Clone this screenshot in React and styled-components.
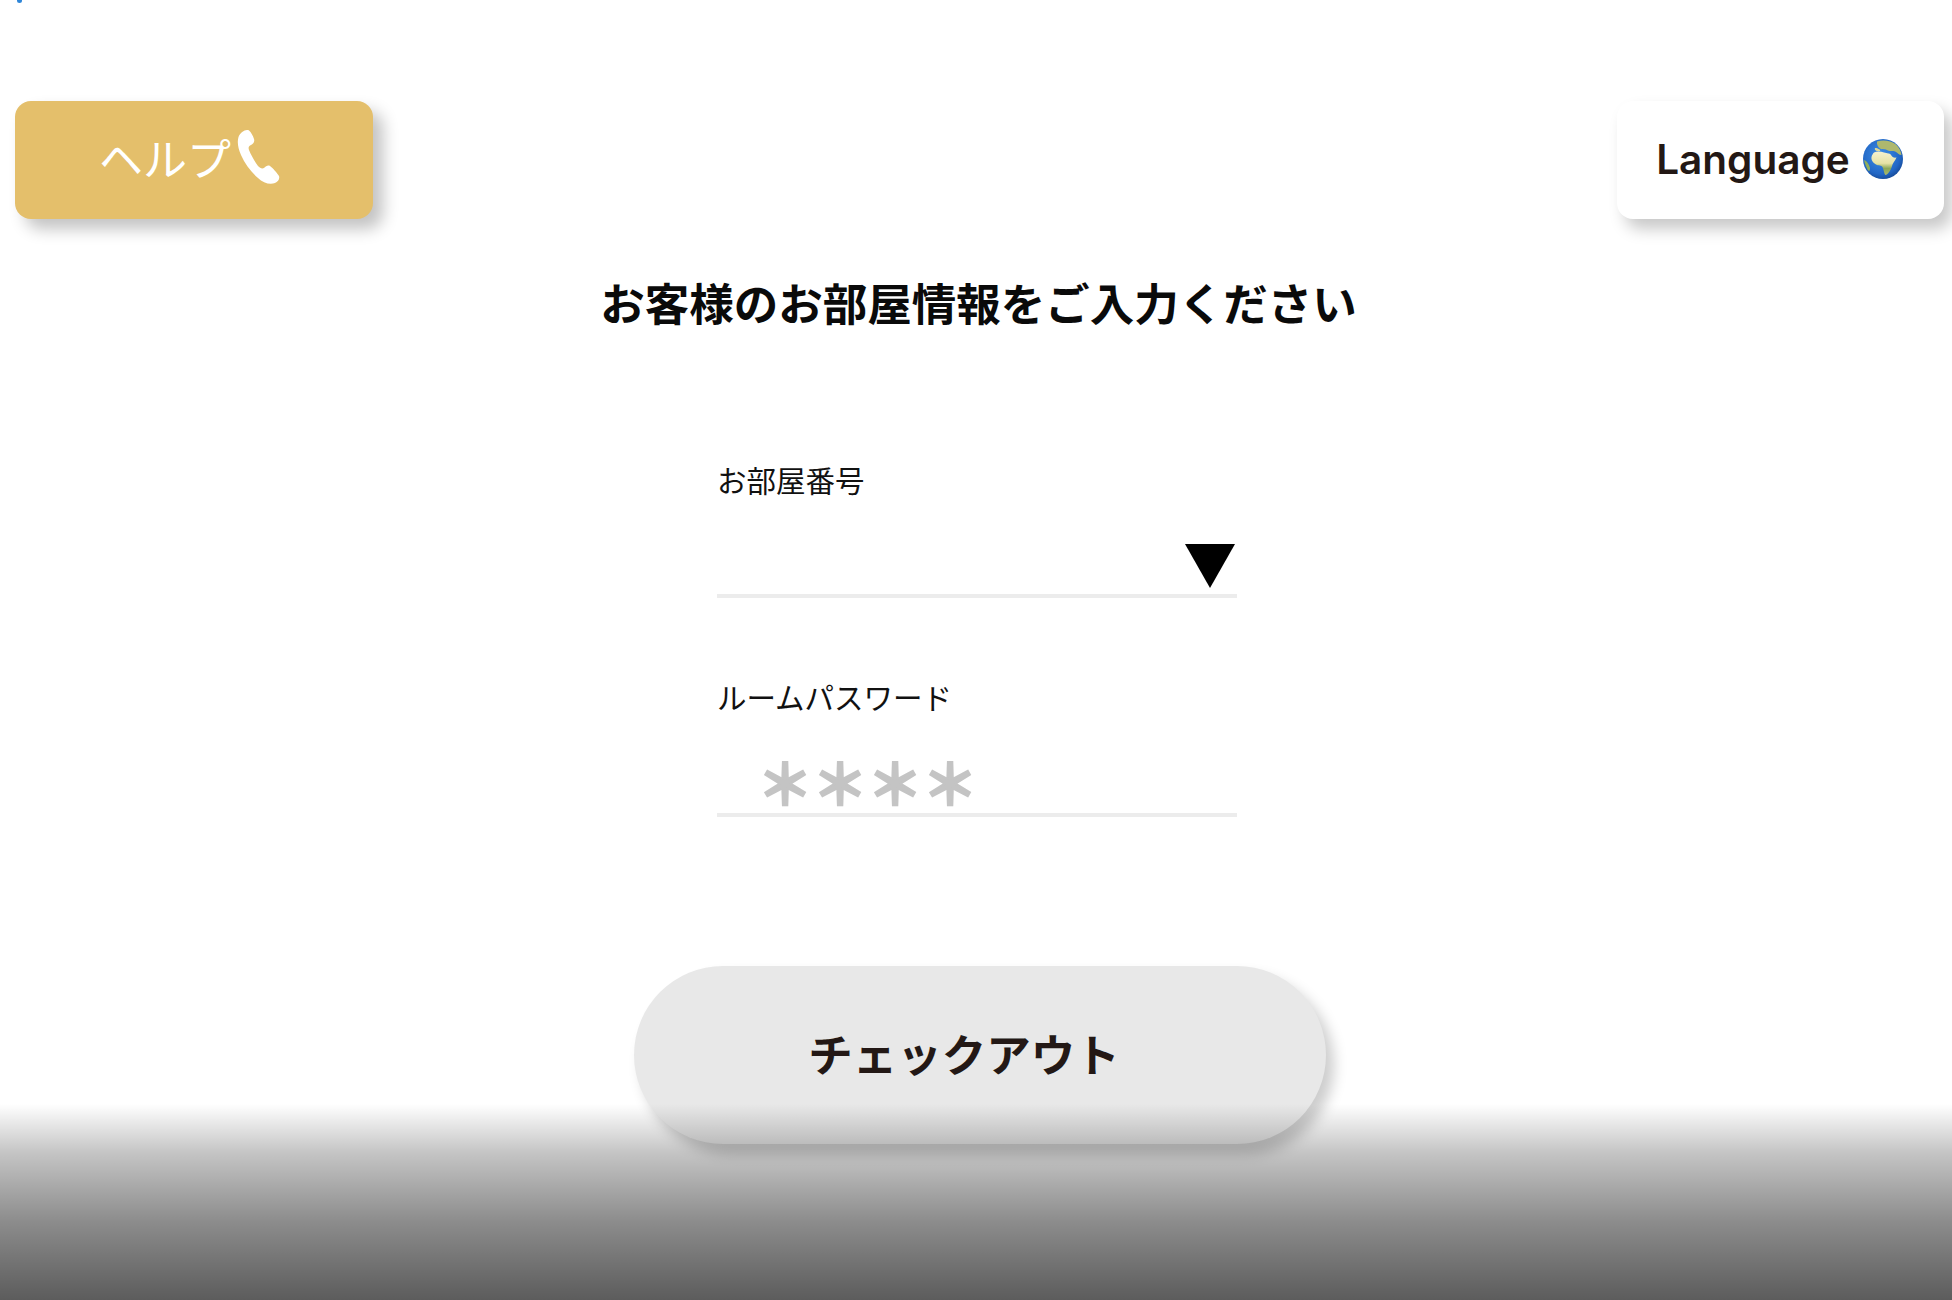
import React from 'react';
import styled, { createGlobalStyle } from 'styled-components';

const Global = createGlobalStyle`
  html, body { margin: 0; padding: 0; background: #fff; }
  * { box-sizing: border-box; }
  body { font-family: "Noto Sans CJK JP", "Noto Sans", sans-serif; }
`;

const Page = styled.main`
  position: relative;
  width: 1952px;
  height: 1300px;
  overflow: hidden;
  background: #fff;
  display: flex;
  flex-direction: column;
`;

const TopMark = styled.i`
  position: absolute;
  left: 17px;
  top: 0;
  width: 5px;
  height: 3px;
  border-radius: 0 0 3px 3px;
  background: #2f86d8;
`;

const TopBar = styled.header`
  display: flex;
  justify-content: space-between;
  padding: 101px 8px 0 15px;
`;

const HelpButton = styled.button`
  width: 358px;
  height: 118px;
  border: 0;
  border-radius: 16px;
  background: #e4bf6b;
  color: #fff;
  font-family: inherit;
  font-size: 44px;
  font-weight: 400;
  display: flex;
  align-items: center;
  justify-content: center;
  gap: 6px;
  padding: 0 8px 6px 0;
  box-shadow: 10px 10px 16px rgba(0, 0, 0, 0.24);
`;

const LanguageButton = styled.button`
  width: 327px;
  height: 118px;
  border: 0;
  border-radius: 16px;
  background: #fff;
  color: #231815;
  font-family: Inter, "Noto Sans", sans-serif;
  font-size: 40.5px;
  font-weight: 600;
  display: flex;
  align-items: center;
  justify-content: center;
  gap: 13px;
  padding: 0 2px 2px 0;
  box-shadow: 8px 10px 16px rgba(0, 0, 0, 0.22);
`;

const Title = styled.h1`
  margin: 50px 0 0 5px;
  font-size: 44.5px;
  line-height: 66px;
  font-weight: 700;
  color: #0a0a0a;
  text-align: center;
`;

const Form = styled.form`
  width: 520px;
  margin: 122px 0 0 717px;
  display: flex;
  flex-direction: column;
  gap: 76px;
`;

const Field = styled.div`
  display: flex;
  flex-direction: column;
`;

const Label = styled.label`
  font-size: 29.5px;
  line-height: 44px;
  color: #111;
  font-weight: 400;
`;

const Control = styled.div`
  height: ${p => p.$h}px;
  border-bottom: 4px solid #ececec;
  display: flex;
  align-items: flex-end;
  justify-content: ${p => (p.$end ? 'flex-end' : 'flex-start')};
  padding: ${p => p.$pad};
`;

const Arrow = styled.span`
  width: 0;
  height: 0;
  border-left: 25px solid transparent;
  border-right: 25px solid transparent;
  border-top: 44px solid #000;
`;

const Mask = styled.span`
  font-size: 56px;
  line-height: 56px;
  letter-spacing: -1px;
  color: #c4c4c4;
  font-weight: 700;
  -webkit-text-stroke: 2px #c4c4c4;
`;

const Checkout = styled.button`
  align-self: flex-start;
  width: 692px;
  height: 178px;
  margin: 149px 0 0 634px;
  border: 0;
  border-radius: 89px;
  background: #e8e8e8;
  color: #231815;
  font-family: inherit;
  font-size: 44.5px;
  font-weight: 700;
  padding: 0 32px 5px 0;
  box-shadow: 8px 10px 14px rgba(0, 0, 0, 0.2);
`;

const Fade = styled.div`
  position: absolute;
  left: 0;
  right: 0;
  bottom: 0;
  height: 196px;
  pointer-events: none;
  background: linear-gradient(to bottom, rgba(0,0,0,0) 0%, rgba(0,0,0,0.23) 25%, rgba(0,0,0,0.45) 60%, rgba(0,0,0,0.64) 100%);
`;

const Phone = () => (
  <svg width="44" height="56" viewBox="0 0 44 56" aria-hidden="true">
    <path
      fill="#fff"
      d="M10 1 C7 1 3 4 1.500 8 C0 13 1 19 4 26 C8 35 14 43 21 49 C26 54 33 56 38 54 C41 53 43 50 42 47 C40 44 36 39 33 37 C31 36 29 37 27 39 C25 40 23 39 21 37 C18 33 14 26 12 21 C11 18 12 17 14 16 C16 15 18 13 17 10 C16 7 14 3 12 1.500 C11.500 1 11 1 10 1 Z"
    />
  </svg>
);

const Globe = () => (
  <svg width="40" height="40" viewBox="0 0 40 40" aria-hidden="true">
    <defs>
      <radialGradient id="sea" cx="0.45" cy="0.4" r="0.68">
        <stop offset="0" stopColor="#3f8fe6" />
        <stop offset="0.7" stopColor="#2267c6" />
        <stop offset="1" stopColor="#123f86" />
      </radialGradient>
      <linearGradient id="land" x1="0" y1="0" x2="0" y2="1">
        <stop offset="0" stopColor="#f6f2cf" />
        <stop offset="0.5" stopColor="#e6e2a6" />
        <stop offset="0.72" stopColor="#8aa858" />
        <stop offset="1" stopColor="#a9b86c" />
      </linearGradient>
    </defs>
    <circle cx="20" cy="20" r="20" fill="url(#sea)" />
    <path fill="#aeb86e" d="M14 2.500 C20 0.500 28 1.500 33 5.500 C36 8 38 12 38.500 16 C36 16 35 14 33 13 C30 11 27 13 25 11.500 C22 9.500 20 11 17 9.500 C15 8 13.500 5.500 14 2.500 Z" />
    <path fill="#dcd998" d="M12 9 C15 9 18 11 17 12 C14 12.500 11 11.500 12 9 Z" />
    <path fill="url(#land)" d="M11 13.500 C14 12 18 12.500 21 13.500 C24 14.500 27 14 28 16 C29 18 31 19 33.500 18.500 C32 22 29.500 24 29 27 C28 31 25 35.500 22.500 36 C21 35 21 31 19.500 28 C18.500 26 15.500 27 13 25.500 C10 24 8 21 8.500 18 C9 16 10 14.500 11 13.500 Z" />
    <path fill="#8fae5a" d="M1 21 C4 22 6 25 7 29 C7 32 6 33 4.500 30.500 C3 27 2 25 1 21 Z" />
  </svg>
);

export default function App() {
  return (
    <>
      <Global />
      <Page>
        <TopMark />
        <TopBar>
          <HelpButton type="button">ヘルプ<Phone /></HelpButton>
          <LanguageButton type="button">Language<Globe /></LanguageButton>
        </TopBar>
        <Title>お客様のお部屋情報をご入力ください</Title>
        <Form>
          <Field>
            <Label>お部屋番号</Label>
            <Control $h={97} $end $pad="0 2px 6px 0"><Arrow /></Control>
          </Field>
          <Field>
            <Label>ルームパスワード</Label>
            <Control $h={99} $pad="0 0 4px 40px"><Mask>＊＊＊＊</Mask></Control>
          </Field>
        </Form>
        <Checkout type="button">チェックアウト</Checkout>
        <Fade />
      </Page>
    </>
  );
}
